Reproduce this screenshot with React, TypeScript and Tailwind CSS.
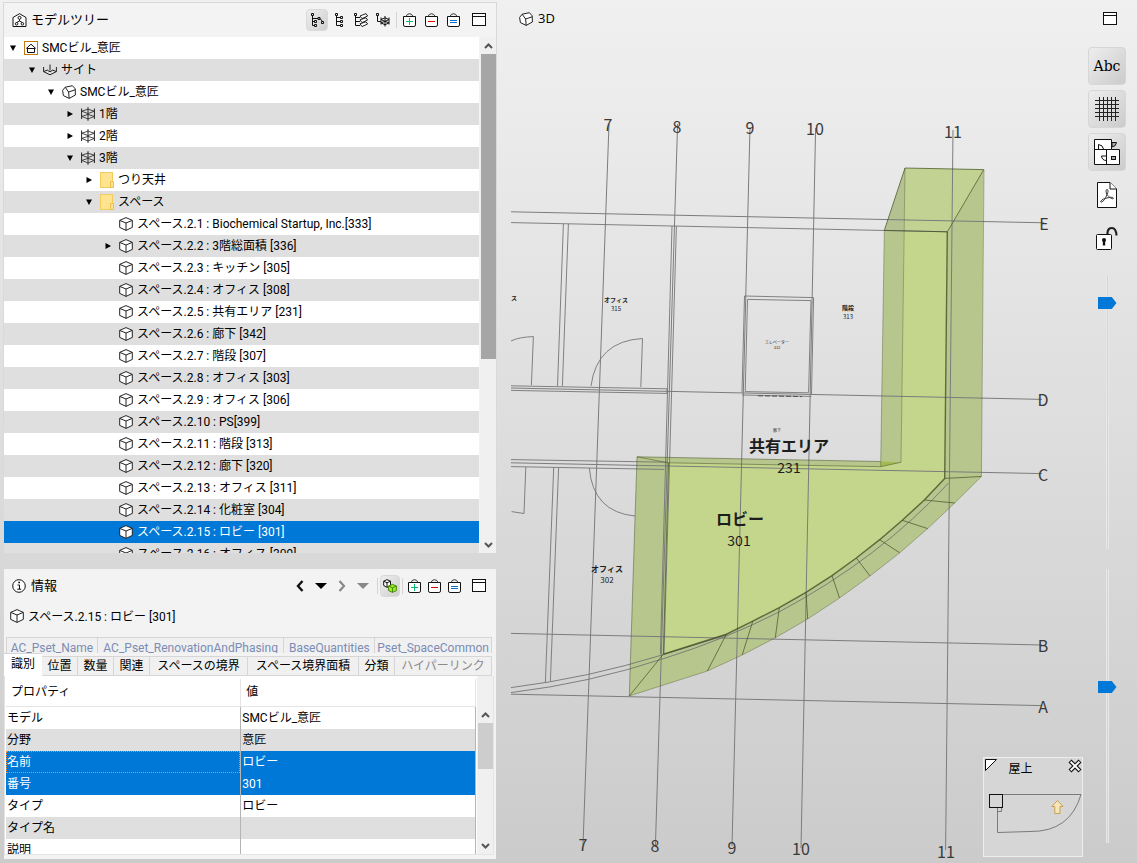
import { useState } from 'react';
import type { ReactNode } from 'react';
import clsx from 'clsx';

type NodeIcon = 'home' | 'site' | 'building' | 'storey' | 'folder' | 'space';

interface TreeNode {
  label: string;
  depth: number;
  icon: NodeIcon;
  state?: 'open' | 'closed';
}

const treeNodes: TreeNode[] = [
  { label: 'SMCビル_意匠', depth: 0, icon: 'home', state: 'open' },
  { label: 'サイト', depth: 1, icon: 'site', state: 'open' },
  { label: 'SMCビル_意匠', depth: 2, icon: 'building', state: 'open' },
  { label: '1階', depth: 3, icon: 'storey', state: 'closed' },
  { label: '2階', depth: 3, icon: 'storey', state: 'closed' },
  { label: '3階', depth: 3, icon: 'storey', state: 'open' },
  { label: 'つり天井', depth: 4, icon: 'folder', state: 'closed' },
  { label: 'スペース', depth: 4, icon: 'folder', state: 'open' },
  { label: 'スペース.2.1 : Biochemical Startup, Inc.[333]', depth: 5, icon: 'space' },
  { label: 'スペース.2.2 : 3階総面積 [336]', depth: 5, icon: 'space', state: 'closed' },
  { label: 'スペース.2.3 : キッチン [305]', depth: 5, icon: 'space' },
  { label: 'スペース.2.4 : オフィス [308]', depth: 5, icon: 'space' },
  { label: 'スペース.2.5 : 共有エリア [231]', depth: 5, icon: 'space' },
  { label: 'スペース.2.6 : 廊下 [342]', depth: 5, icon: 'space' },
  { label: 'スペース.2.7 : 階段 [307]', depth: 5, icon: 'space' },
  { label: 'スペース.2.8 : オフィス [303]', depth: 5, icon: 'space' },
  { label: 'スペース.2.9 : オフィス [306]', depth: 5, icon: 'space' },
  { label: 'スペース.2.10 : PS[399]', depth: 5, icon: 'space' },
  { label: 'スペース.2.11 : 階段 [313]', depth: 5, icon: 'space' },
  { label: 'スペース.2.12 : 廊下 [320]', depth: 5, icon: 'space' },
  { label: 'スペース.2.13 : オフィス [311]', depth: 5, icon: 'space' },
  { label: 'スペース.2.14 : 化粧室 [304]', depth: 5, icon: 'space' },
  { label: 'スペース.2.15 : ロビー [301]', depth: 5, icon: 'space' },
  { label: 'スペース.2.16 : オフィス [309]', depth: 5, icon: 'space' },
];

const psetTabs = ['AC_Pset_Name', 'AC_Pset_RenovationAndPhasing', 'BaseQuantities', 'Pset_SpaceCommon'];
const infoTabs = ['識別', '位置', '数量', '関連', 'スペースの境界', 'スペース境界面積', '分類', 'ハイパーリンク'];

const properties = [
  { name: 'モデル', value: 'SMCビル_意匠' },
  { name: '分野', value: '意匠' },
  { name: '名前', value: 'ロビー', selected: true, focused: true },
  { name: '番号', value: '301', selected: true },
  { name: 'タイプ', value: 'ロビー' },
  { name: 'タイプ名', value: '' },
  { name: '説明', value: '' },
];

/* ---------- icons ---------- */

function Icon({ children, size = 14 }: { children: ReactNode; size?: number }) {
  return (
    <svg width={size} height={size} viewBox={`0 0 ${size} ${size}`} fill="none" stroke="#111" className="shrink-0">
      {children}
    </svg>
  );
}

function SpaceIcon() {
  return (
    <Icon>
      <path d="M7 .6 13.3 3.4V10.4L7 13.4.7 10.4V3.4Z" fill="#fff" stroke="#222" />
      <path d="M.7 3.4 7 6 13.3 3.4M7 6V13.4" stroke="#222" />
    </Icon>
  );
}

function BuildingIcon() {
  return (
    <Icon>
      <path d="M3.2 2.2 10.4.7 13.2 3.8 13.4 10 7.2 13.4 1.4 10.6.6 5.4Z" fill="#fff" stroke="#222" />
      <path d="M3.2 2.2 6.6 7 13.2 4.8M6.6 7 7.2 13.4" stroke="#222" />
    </Icon>
  );
}

function StoreyIcon() {
  return (
    <Icon>
      <path d="M.6 1.5V12M13.4 1.5V12M7 .2V13.8" stroke="#222" />
      <path d="M.8 4.2 7 6.6 13.2 4.2 7 2.2ZM.8 9.4 7 12 13.2 9.4 7 7.4Z" stroke="#333" strokeWidth=".9" />
    </Icon>
  );
}

function NodeIconView({ icon }: { icon: NodeIcon }) {
  switch (icon) {
    case 'home':
      return (
        <Icon>
          <rect x=".5" y=".5" width="13" height="13" fill="#fff" stroke="#c07a12" />
          <path d="M2.2 7.5 7 3.2 11.8 7.5M3.5 6.6V11.5H10.5V6.6M3.5 7.5H10.5" stroke="#111" />
        </Icon>
      );
    case 'site':
      return (
        <Icon>
          <path d="M.6 4V8.6L7 11.8 13.4 8.6V4M7 1.5V7.5M.6 8.6 4.6 7M13.4 8.6 9.4 7M4.4 7.2 7 8.8 9.6 7.2" stroke="#222" />
        </Icon>
      );
    case 'building':
      return <BuildingIcon />;
    case 'storey':
      return <StoreyIcon />;
    case 'folder':
      return (
        <svg width="14" height="16" viewBox="0 0 14 16" className="shrink-0">
          <rect x=".5" y=".5" width="12" height="15" fill="#ffe391" stroke="#f2cd5c" />
          <path d="M10.5 15.5V9.5H13.5V15.5Z" fill="#ffe391" stroke="#eac04a" />
        </svg>
      );
    default:
      return <SpaceIcon />;
  }
}

function BagIcon({ kind }: { kind: 'add' | 'remove' | 'set' }) {
  return (
    <Icon>
      <path d="M.5 3.5H12.5V11.9Q12.5 13.5 10.9 13.5H2.1Q.5 13.5.5 11.9Z" fill="#fff" />
      <path d="M3 3.5Q4 .7 6.5 .7T10 3.5" stroke="#333" />
      {kind === 'add' && <path d="M3 8.5H10M6.5 5V12" stroke="#00b96b" />}
      {kind === 'remove' && <path d="M3 8.5H10" stroke="#e00000" />}
      {kind === 'set' && <path d="M3 7.5H10M3 9.5H10" stroke="#0b70c8" />}
    </Icon>
  );
}

function WindowIcon() {
  return (
    <Icon>
      <rect x=".5" y=".5" width="13" height="12" fill="#fff" />
      <path d="M.5 3.5H13.5" />
    </Icon>
  );
}

function ModelTreeIcon() {
  return (
    <Icon size={15}>
      <path d="M7.5.7 14 4.5V13.5H1V4.5Z" fill="#fff" />
      <circle cx="7.5" cy="4.8" r="1.5" />
      <path d="M7.5 6.3V8M7.5 8 4.5 9.6M7.5 8 10.5 9.6" />
      <circle cx="4.6" cy="10.8" r="1.3" />
      <circle cx="10.4" cy="10.8" r="1.3" />
    </Icon>
  );
}

function TreeModeIcon({ mode }: { mode: 'containment' | 'component' | 'layer' | 'storey' }) {
  return (
    <Icon>
      {mode === 'containment' && (
        <path d="M1.5.5H3.5V2.5H1.5ZM8 4.5H10V6.5H8ZM4.5 7.5H6.5V9.5H4.5ZM4.5 11.5H6.5V13.5H4.5ZM11.5 8.5H13.5V10.5H11.5ZM2.5 2.5V12.5H4.5M2.5 8.5H4.5M2.5 5.5H8M10 5.5 12.5 8.5" />
      )}
      {mode === 'component' && (
        <path d="M3.5.5H5.5V2.5H3.5ZM8.5 3.5H10.5V5.5H8.5ZM8.5 7.5H10.5V9.5H8.5ZM8.5 11.5H10.5V13.5H8.5ZM4.5 2.5V12.5H8.5M4.5 4.5H8.5M4.5 8.5H8.5" />
      )}
      {mode === 'layer' && (
        <>
          <path d="M.5.5H2.5V2.5H.5ZM1.5 2.5V12.5H6M1.5 4.5H6M1.5 8.5H6" />
          <path d="M6 10.8 12 8.8 13.6 11 8 13.6ZM6 6.8 12 4.8 13.6 7 8 9.6ZM6 3 12 .6 13.6 3 8 5.6Z" fill="#fff" stroke="#222" />
        </>
      )}
      {mode === 'storey' && (
        <>
          <path d="M.5.5H2.5V2.5H.5ZM1.5 2.5V8.5H5" />
          <path d="M5 4.5V11.5M13 4.5V11.5M9 3V13.5M5 6.5 9 8.4 13 6.5 9 4.8ZM5 9.8 9 11.8 13 9.8 9 8.4Z" />
        </>
      )}
    </Icon>
  );
}

function ToolButton({
  label,
  pressed,
  wide,
  children,
}: {
  label: string;
  pressed?: boolean;
  wide?: boolean;
  children: ReactNode;
}) {
  return (
    <button
      aria-label={label}
      aria-pressed={pressed}
      className={clsx(
        'flex h-[22px] shrink-0 items-center justify-center rounded border',
        wide ? 'w-[22px]' : 'w-5',
        pressed ? 'border-[#d9d9d9] bg-linear-to-br from-[#eeeeee] to-[#cfcfcf]' : 'border-transparent',
      )}
    >
      {children}
    </button>
  );
}

function Separator() {
  return <span className="mx-[2px] h-4 w-px shrink-0 bg-[#d4d4d4]" />;
}

function ScrollBar({ thumbClass }: { thumbClass: string }) {
  return (
    <div className="flex w-4 shrink-0 flex-col items-center bg-[#f0f0f0]">
      <svg width="15" height="17" viewBox="0 0 15 17" fill="none" stroke="#555" strokeWidth="2" className="shrink-0">
        <path d="M4 11 7.5 7.5 11 11" />
      </svg>
      <div className={clsx('w-[15px] shrink-0', thumbClass)} />
      <div className="flex-1" />
      <svg width="15" height="17" viewBox="0 0 15 17" fill="none" stroke="#555" strokeWidth="2" className="shrink-0">
        <path d="M4 7 7.5 10.5 11 7" />
      </svg>
    </div>
  );
}

/* ---------- left column ---------- */

function ModelTreePanel() {
  const [selected, setSelected] = useState(22);

  return (
    <section className="flex min-h-0 flex-col overflow-hidden bg-[#f3f3f3] ring-1 ring-[#d9d9d9]">
      <header className="flex h-[34px] shrink-0 items-center pr-[6px] pl-2">
        <ModelTreeIcon />
        <h2 className="ml-1 text-[13px]">モデルツリー</h2>
        <div className="ml-auto flex items-center">
          <ToolButton label="包含階層" pressed wide><TreeModeIcon mode="containment" /></ToolButton>
          <ToolButton label="コンポーネント階層" wide><TreeModeIcon mode="component" /></ToolButton>
          <ToolButton label="レイヤー階層" wide><TreeModeIcon mode="layer" /></ToolButton>
          <ToolButton label="階別" wide><TreeModeIcon mode="storey" /></ToolButton>
          <Separator />
          <ToolButton label="追加" wide><BagIcon kind="add" /></ToolButton>
          <ToolButton label="削除" wide><BagIcon kind="remove" /></ToolButton>
          <ToolButton label="設定" wide><BagIcon kind="set" /></ToolButton>
          <span className="w-[3px]" />
          <ToolButton label="最大化" wide><WindowIcon /></ToolButton>
        </div>
      </header>

      <div className="flex min-h-0 flex-1 gap-px">
        <ul role="tree" aria-label="モデルツリー" className="min-w-0 flex-1 overflow-hidden bg-white">
          {treeNodes.map((node, i) => (
            <li
              key={i}
              role="treeitem"
              aria-selected={i === selected}
              onClick={() => setSelected(i)}
              style={{ paddingLeft: 5 + node.depth * 19 }}
              className={clsx(
                'flex h-[22px] items-center whitespace-nowrap',
                i === selected ? 'bg-[#0078d7] text-white' : i % 2 ? 'bg-[#dfdfdf]' : 'bg-white',
              )}
            >
              <svg width="8" height="8" viewBox="0 0 8 8" className="mr-[7px] shrink-0">
                {node.state === 'open' && <path d="M1 1.5H7L4 7Z" fill="#000" />}
                {node.state === 'closed' && <path d="M1.5 1 7 4 1.5 7Z" fill="#000" />}
              </svg>
              <NodeIconView icon={node.icon} />
              <span className="ml-1">{node.label}</span>
            </li>
          ))}
        </ul>
        <ScrollBar thumbClass="h-[305px] bg-[#a6a6a6]" />
      </div>
    </section>
  );
}

function InfoPanel() {
  const [tab, setTab] = useState('識別');

  return (
    <section className="flex min-h-0 flex-col overflow-hidden bg-[#f3f3f3]">
      <header className="flex h-[34px] shrink-0 items-center pr-[7px] pl-2">
        <Icon>
          <circle cx="7" cy="7" r="6.3" fill="#fff" />
          <path d="M5.5 6H7.5V10M5.2 10.2H9.2" />
          <path d="M6.3 3.5H8" strokeWidth="1.6" />
        </Icon>
        <h2 className="ml-[5px] text-[13px]">情報</h2>
        <div className="ml-auto flex items-center">
          <div className="flex gap-px pr-[2px]">
            <ToolButton label="戻る"><Icon><path d="M9.5 2 5 7 9.5 12" strokeWidth="2.4" /></Icon></ToolButton>
            <ToolButton label="履歴"><Icon><path d="M1 4H13L7 10Z" fill="#000" stroke="none" /></Icon></ToolButton>
            <ToolButton label="進む"><Icon><path d="M4.5 2 9 7 4.5 12" stroke="#888" strokeWidth="2.2" /></Icon></ToolButton>
            <ToolButton label="進む履歴"><Icon><path d="M1 4H13L7 10Z" fill="#888" stroke="none" /></Icon></ToolButton>
          </div>
          <Separator />
          <ToolButton label="連動" pressed>
            <Icon>
              <path d="M4 .7 7.5 2.2V6.5L4 8.3.7 6.5V2.2Z" fill="#fff" />
              <path d="M.7 2.2 4 3.8 7.5 2.2M4 3.8V8.3" />
              <path d="M9.5 5.4 13.4 7V11.6L9.5 13.4 5.5 11.6V7Z" fill="#9bea30" stroke="#4c8a08" />
              <path d="M5.5 7 9.5 8.8 13.4 7M9.5 8.8V13.4" stroke="#4c8a08" />
            </Icon>
          </ToolButton>
          <Separator />
          <ToolButton label="追加"><BagIcon kind="add" /></ToolButton>
          <ToolButton label="削除"><BagIcon kind="remove" /></ToolButton>
          <ToolButton label="設定"><BagIcon kind="set" /></ToolButton>
          <span className="w-1" />
          <ToolButton label="最大化"><WindowIcon /></ToolButton>
        </div>
      </header>

      <div className="flex h-[34px] shrink-0 items-start pt-[6px] pl-[6px]">
        <SpaceIcon />
        <span className="ml-1 leading-4">スペース.2.15 : ロビー [301]</span>
      </div>

      <div role="tablist" aria-label="プロパティセット" className="mr-1 ml-[2px] grid h-4 shrink-0 grid-cols-[91fr_187fr_91fr_117fr] overflow-hidden border-t border-l border-[#d6d6d6]">
        {psetTabs.map((name) => (
          <button
            key={name}
            role="tab"
            aria-selected={false}
            className="h-5 overflow-hidden border-r border-[#d6d6d6] bg-[#f0f0f0] leading-5 whitespace-nowrap text-[#7b8cb4]"
          >
            {name}
          </button>
        ))}
      </div>
      <div role="tablist" aria-label="情報タブ" className="mr-1 grid h-[23px] shrink-0 grid-cols-[38fr_36fr_36fr_36fr_98fr_111fr_36fr_97fr] items-end">
        {infoTabs.map((name) => (
          <button
            key={name}
            role="tab"
            aria-selected={tab === name}
            onClick={() => setTab(name)}
            className={clsx(
              'overflow-hidden border-[#d6d6d6] whitespace-nowrap',
              tab === name ? 'h-[23px] border-t bg-white pb-[2px]' : 'h-5 border-y border-r bg-[#f0f0f0]',
              name === 'ハイパーリンク' && 'text-[#8a8a8a]',
            )}
          >
            {name}
          </button>
        ))}
      </div>

      <div className="mr-[2px] flex min-h-0 flex-1 flex-col pb-1">
        <div className="flex min-h-0 flex-1 border border-t-0 border-[#e4e4e4] bg-white pt-[3px] pl-px">
          <div className="min-w-0 flex-1 overflow-hidden">
            <table className="w-full table-fixed border-collapse text-left">
              <thead>
                <tr className="h-[27px]">
                  <th className="border-r border-b border-[#e5e5e5] pl-[5px] font-normal">プロパティ</th>
                  <th className="border-r border-b border-[#e5e5e5] pl-[5px] font-normal">値</th>
                </tr>
              </thead>
              <tbody>
                {properties.map((p, i) => (
                  <tr
                    key={p.name}
                    className={clsx(
                      'h-[22px]',
                      p.selected ? 'bg-[#0078d7] text-white' : i % 2 ? 'bg-[#dfdfdf]' : 'bg-white',
                    )}
                  >
                    <td className="border-r border-[#b4b4b4] p-0">
                      <div
                        className={clsx(
                          'h-[22px] border leading-5',
                          p.focused ? 'border-dotted border-[#ff8728]' : 'border-transparent',
                        )}
                      >
                        {p.name}
                      </div>
                    </td>
                    <td className="border-r border-[#b4b4b4] p-0 pl-px">{p.value}</td>
                  </tr>
                ))}
              </tbody>
            </table>
          </div>
          <div className="-mt-[3px] ml-px flex shrink-0 bg-[#f0f0f0] pt-[30px]">
            <ScrollBar thumbClass="h-[46px] bg-[#cdcdcd]" />
          </div>
        </div>
      </div>
    </section>
  );
}

/* ---------- 3D view ---------- */

const verticalAxes = [
  { name: '7', x1: 609, y1: 124, x2: 583, y2: 845, tx: 608, ty: 131, bx: 583, by: 851 },
  { name: '8', x1: 677.6, y1: 124, x2: 655.4, y2: 846, tx: 677, ty: 133, bx: 655, by: 852 },
  { name: '9', x1: 750, y1: 127, x2: 732, y2: 846, tx: 750, ty: 134, bx: 732, by: 854 },
  { name: '10', x1: 815.6, y1: 128, x2: 801, y2: 848, tx: 815, ty: 135, bx: 801, by: 855 },
  { name: '11', x1: 953, y1: 130, x2: 945.6, y2: 850, tx: 953, ty: 138, bx: 946, by: 858 },
];

const horizontalAxes = [
  { name: 'E', y1: 211.8, x2: 1044, y2: 222.8, ty: 230 },
  { name: 'D', y1: 388, x2: 1042, y2: 399.4, ty: 406 },
  { name: 'C', y1: 462.8, x2: 1042, y2: 473.6, ty: 481 },
  { name: 'B', y1: 633.4, x2: 1042, y2: 645, ty: 652 },
  { name: 'A', y1: 694.2, x2: 1042, y2: 705.6, ty: 713 },
];

// [outer point, inner point] of each facet along the curved wall
const facets = [
  [981.4, 476.5, 944.7, 478.4],
  [954.7, 503, 924.3, 500],
  [927.7, 528.6, 902.3, 520.3],
  [899.7, 552.8, 879.7, 539.7],
  [870, 576, 856.3, 558],
  [839.5, 598, 832, 575.6],
  [807.7, 619, 806, 592.4],
  [775.3, 637.8, 779.3, 607.6],
  [742.2, 655, 752.8, 621.2],
  [707.4, 671, 726.4, 634.2],
  [629.3, 696, 663.4, 654.2],
];

const outerCurve = facets.map((f) => `${f[0]},${f[1]}`).join(' ');
const innerCurve = facets.map((f) => `${f[2]},${f[3]}`).join(' ');

function Scene() {
  return (
    <svg
      viewBox="500 0 637 863"
      preserveAspectRatio="xMinYMin meet"
      className="absolute inset-0 h-full w-full font-['Noto_Sans_CJK_JP',sans-serif]"
      fill="none"
    >
      {/* lobby volume */}
      <polygon points={`905,168 983.8,169.6 ${outerCurve} 637,456.8 880.6,461.5 884.3,230.4`} fill="#b7c68c" />
      <polygon points="905,168 983.8,169.6 947.3,231.8 884.3,230.4" fill="#c2d292" />
      <polygon points="905,168 884.3,230.4 903.6,230.8" fill="#b4c292" />
      <polygon points={`903.6,230.8 947.3,231.8 ${innerCurve} 668,462.8 880.7,466.7 901,462.3`} fill="#c4d68c" />
      <polygon points="880.6,461.5 901,462.3 880.7,466.7" fill="#a3bb50" />

      {/* axes */}
      <g stroke="#7c7c7c" strokeWidth="1">
        {verticalAxes.map((a) => (
          <line key={a.name} x1={a.x1} y1={a.y1} x2={a.x2} y2={a.y2} />
        ))}
        {horizontalAxes.map((a) => (
          <line key={a.name} x1="511" y1={a.y1} x2={a.x2} y2={a.y2} />
        ))}
      </g>

      {/* walls */}
      <g stroke="#757575" strokeWidth=".9">
        <path d="M511 222.6 947 231.8" />
        <path d="M563.4 224 557.5 386M568.4 224 562.4 386" />
        <path d="M672 226 660.4 654M676.4 226 664 654" />
        <path d="M511 385.8 667 388.8V393.4L511 390.4" />
        <path d="M511 459.6 667 462.2M511 466.6 664.4 469.4" />
        <path d="M553.7 467.5 545.4 682M558.6 467.5 550.4 681" />
        <path d="M744.5 296 813.6 297.6 811.5 394.5M744.5 296 742 392.4M747.5 299.4 811 300.6 808.6 392.8 745.2 391.6ZM742 395 811.4 396.4" />
        <path d="M758 395.8 802 396.6" strokeDasharray="5 2" stroke="#444" />
        <path d="M642.5 338.5 640.8 387M642.5 338.5Q597 341 591 386" />
        <path d="M533.4 336.6 531.4 385M533.4 336.6Q519 337 511 341" />
        <path d="M589.3 468Q593 512 635 516" />
        <path d="M525.8 467 524 513.5 511.6 511.6" />
        <path d="M511 687.6Q588 678 663.4 654.6L726.4 635" />
        <path d="M511 692.6Q590 683 664 658.5 726 639 779 612 880 558 948.5 483" />
      </g>

      {/* volume edges */}
      <g stroke="#3f4a22" strokeOpacity=".75" strokeWidth=".9">
        <polyline points={innerCurve} strokeWidth="1.5" />
        <polyline points={outerCurve} strokeOpacity=".4" />
        {facets.map((f) => (
          <line key={f[0]} x1={f[0]} y1={f[1]} x2={f[2]} y2={f[3]} />
        ))}
        <path d="M884.3 230.4 905 168 983.8 169.6 947.3 231.8 884.3 230.4" />
        <path d="M947.3 231.8 944.7 478.4" strokeWidth="1.4" />
        <path d="M984 170 981.4 476.5M905 168 901 462.3M884.3 230.4 880.7 466.7" strokeOpacity=".4" />
        <path d="M880.7 466.7 901 462.3M637 456.8 880.6 461.5M668 462.8 880.7 466.7M637 456.8 668 462.8" strokeOpacity=".55" />
        <path d="M637 456.8 629.3 696" strokeOpacity=".5" />
        <path d="M668.5 463 663.4 654.2" />
      </g>

      {/* labels */}
      <g fill="#3a3a3a" fontSize="16" textAnchor="middle">
        {verticalAxes.map((a) => (
          <g key={a.name}>
            <text x={a.tx} y={a.ty}>{a.name}</text>
            <text x={a.bx} y={a.by}>{a.name}</text>
          </g>
        ))}
        {horizontalAxes.map((a) => (
          <text key={a.name} x={a.name === 'E' ? 1044 : 1043} y={a.ty}>{a.name}</text>
        ))}
      </g>
      <g fill="#1d1d1d" textAnchor="middle">
        <g fontSize="16">
          <text x="789" y="452" fontWeight="700">共有エリア</text>
          <text x="740" y="525" fontWeight="700">ロビー</text>
        </g>
        <g fontSize="14">
          <text x="789" y="473">231</text>
          <text x="739" y="546">301</text>
        </g>
        <g fontSize="8">
          <text x="607" y="572" fontWeight="700">オフィス</text>
          <text x="607" y="583">302</text>
        </g>
        <g fontSize="6">
          <text x="514" y="300" fontWeight="700">ス</text>
          <text x="616" y="302" fontWeight="700">オフィス</text>
          <text x="616" y="311">315</text>
          <text x="848" y="310" fontWeight="700">階段</text>
          <text x="848" y="319">313</text>
        </g>
        <g fontSize="4">
          <text x="777" y="344">エレベーター</text>
          <text x="777" y="349">312</text>
          <text x="777" y="432">廊下</text>
        </g>
      </g>
    </svg>
  );
}

function SideButton({ label, pressed, children }: { label: string; pressed?: boolean; children: ReactNode }) {
  return (
    <button
      aria-label={label}
      className={clsx(
        'flex size-[38px] shrink-0 items-center justify-center rounded border',
        pressed ? 'border-[#d6d6d6] bg-linear-to-br from-[#eeeeee] to-[#cbcbcb]' : 'border-transparent',
      )}
    >
      {children}
    </button>
  );
}

function HeightSlider({ label, value }: { label: string; value: number }) {
  return (
    <label className="relative flex min-h-0 w-[19px] flex-1 justify-center">
      <span className="sr-only">{label}</span>
      <span className="w-[3px] border-x border-[#e8e8e8] bg-[#d4d4d4]" />
      <input
        type="range"
        min={0}
        max={262}
        defaultValue={value}
        className="absolute inset-0 m-0 h-full w-[19px] appearance-none bg-transparent [writing-mode:vertical-lr] [&::-webkit-slider-thumb]:h-3 [&::-webkit-slider-thumb]:w-[19px] [&::-webkit-slider-thumb]:appearance-none [&::-webkit-slider-thumb]:bg-[#0078d7] [&::-webkit-slider-thumb]:[clip-path:polygon(0_0,75%_0,100%_50%,75%_100%,0_100%)]"
      />
    </label>
  );
}

function FloorMap() {
  return (
    <div className="absolute right-[54px] bottom-[6px] size-[100px] border border-[#eeeeee] bg-[#d6d6d6]">
      <div className="flex h-6 items-start justify-between pt-px pl-px">
        <svg width="12" height="12" viewBox="0 0 12 12" fill="#fff" stroke="#111">
          <path d="M.5.5H11.5L.5 11.5Z" />
        </svg>
        <span className="mr-6 pt-[2px] leading-4">屋上</span>
        <button aria-label="閉じる">
          <svg width="14" height="14" viewBox="0 0 14 14" fill="none">
            <path d="M2 2 12 12M12 2 2 12" stroke="#111" strokeWidth="4.2" />
            <path d="M2.6 2.6 11.4 11.4M11.4 2.6 2.6 11.4" stroke="#fff" strokeWidth="2" />
          </svg>
        </button>
      </div>
      <svg width="98" height="56" viewBox="0 0 98 56" fill="none" stroke="#7a7a7a" className="mt-2">
        <path d="M6 4.5H97Q86 42 46 41.5L13.5 42.5V17" />
        <path d="M13.5 21.5H17.5V17" />
        <rect x="5.5" y="4.5" width="13" height="13" stroke="#111" fill="#d6d6d6" />
        <path d="M73.5 10.5 79 16.5H76V23.5H70.8V16.5H67.8Z" fill="#f6e6b8" stroke="#c9a052" />
      </svg>
    </div>
  );
}

function View3D() {
  return (
    <section className="relative flex min-h-0 flex-col overflow-hidden">
      <Scene />
      <header className="relative flex h-[38px] shrink-0 items-center pr-5 pl-[19px]">
        <BuildingIcon />
        <h2 className="ml-[5px] font-['Open_Sans',sans-serif] text-[13px]">3D</h2>
        <button aria-label="最大化" className="ml-auto"><WindowIcon /></button>
      </header>
      <div className="relative mt-[9px] mr-[11px] flex min-h-0 flex-1 flex-col items-center gap-[5px] self-end pb-5">
        <SideButton label="テキスト" pressed>
          <span className="font-['DejaVu_Serif',serif] text-[14px]">Abc</span>
        </SideButton>
        <SideButton label="グリッド" pressed>
          <svg width="24" height="24" viewBox="0 0 24 24" stroke="#222">
            <path d="M4.5 0V24M8.5 0V24M12.5 0V24M16.5 0V24M20.5 0V24M0 3.5H24M0 7.5H24M0 11.5H24M0 15.5H24M0 19.5H24" />
          </svg>
        </SideButton>
        <SideButton label="平面図" pressed>
          <svg width="26" height="26" viewBox="0 0 26 26" fill="#fff" stroke="#111">
            <path d="M.5.5H17.5V10.5H25.5V25.5H.5Z" />
            <path d="M.5 10.5H17.5M12.5 10.5V25.5M4.5 10V5.5Q9 6 9.5 10M12.5 17H7.5Q8 21.5 12.5 21.5" />
            <path d="M18 3.5H22.5Q22 7.5 18 8Z" fill="#aaa" />
            <rect x="17.5" y="17.5" width="4" height="3" fill="#aaa" />
          </svg>
        </SideButton>
        <SideButton label="PDF">
          <svg width="20" height="26" viewBox="0 0 20 26" fill="#fff" stroke="#111">
            <path d="M.5.5H13L19.5 7V25.5H.5Z" />
            <path d="M13 .5V7H19.5" />
            <path
              d="M10.2 7.5C8.4 7 9 10.5 10 12.5 8.5 16.5 6.5 19.5 4.4 20.2 2.6 20 4.4 17.3 8.5 16.4 12 15.4 15.5 14.6 16.4 16 16.6 17.8 13 16.6 10 12.5 11.4 10 11.3 7.8 10.2 7.5Z"
              fill="none"
              stroke="#333"
            />
          </svg>
        </SideButton>
        <SideButton label="ロック">
          <svg width="24" height="24" viewBox="0 0 24 24" fill="none" stroke="#111">
            <path d="M12.5 8V6.5Q13 2 17 2T21.5 9.5" strokeWidth="2.2" stroke="#222" />
            <rect x="1.5" y="8.5" width="15" height="15" rx="1" fill="#fff" />
            <circle cx="9" cy="14" r="2" fill="#111" stroke="none" />
            <path d="M9 14V19.5" strokeWidth="2.4" />
          </svg>
        </SideButton>
        <div className="mt-[13px] flex min-h-0 flex-1 flex-col gap-5">
          <HeightSlider label="上限" value={22} />
          <HeightSlider label="下限" value={112} />
        </div>
      </div>
      <FloorMap />
    </section>
  );
}

export default function App() {
  return (
    <div className="grid h-screen grid-cols-[500fr_637fr] overflow-hidden bg-linear-to-b from-[#f0f0f0] to-[#cbcbcb] font-['Roboto','Noto_Sans_CJK_JP',sans-serif] text-xs text-black">
      <div className="grid min-h-0 grid-rows-[550fr_290fr] gap-4 pt-[3px] pr-1 pb-1 pl-1">
        <ModelTreePanel />
        <InfoPanel />
      </div>
      <View3D />
    </div>
  );
}
